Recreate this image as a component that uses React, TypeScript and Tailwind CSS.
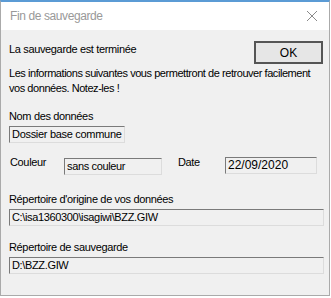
import React from "react";

const Field = ({value, className}: {value: string; className?: string}) => (
    <div
        className={`h-[17px] border border-t-[#7a7a7a] border-l-[#7a7a7a] border-r-[#dcdcdc] border-b-[#dcdcdc] bg-[#f0f0f0] pl-[2px] text-[11px] leading-[15px] text-black whitespace-nowrap overflow-hidden ${className ?? ''}`}>
        {value}
    </div>
);

const App = () => {
    return (
        <div className="w-[331px] h-[298px] bg-white" style={{fontFamily: '"Liberation Sans", Arial, sans-serif'}}>
            <div className="w-[330px] h-[296px] border-t-2 border-t-[#5b9bd5] border-x border-b border-[#aaaaaa] bg-[#f0f0f0] flex flex-col">
                <div className="h-[28px] bg-white flex items-center justify-between pl-[9px] pr-[9px]">
                    <span className="text-[12px] tracking-[-0.4px] text-[#999999]">Fin de sauvegarde</span>
                    <svg width="12" height="12" viewBox="0 0 12 12" className="mr-[2px]">
                        <path d="M1 1L11 11M11 1L1 11" stroke="#8a8a8a" strokeWidth="1"/>
                    </svg>
                </div>
                <div className="flex-1 px-[8px] text-[11px] tracking-[-0.35px] text-black">
                    <div className="flex items-start justify-between pt-[11px]">
                        <span className="leading-[14px] mt-[1px]">La sauvegarde est terminée</span>
                        <button
                            className="w-[69px] h-[23px] mr-[-2px] border-2 border-[#555555] bg-[#e6e6e6] text-[12px] tracking-normal flex items-center justify-center">
                            OK
                        </button>
                    </div>
                    <p className="mt-[2px] leading-[15px] tracking-[-0.45px]">
                        Les informations suivantes vous permettront de retrouver facilement vos données. Notez-les !
                    </p>
                    <div className="mt-[13px] leading-[14px]">Nom des données</div>
                    <Field value="Dossier base commune" className="w-[116px] mt-[3px] tracking-[-0.3px]"/>
                    <div className="flex items-start mt-[12px]">
                        <span className="w-[55px] pl-[1px] leading-[14px]">Couleur</span>
                        <Field value="sans couleur" className="w-[98px] mt-[3px]"/>
                        <span className="ml-[16px] w-[47px] leading-[14px]">Date</span>
                        <Field value="22/09/2020" className="w-[92px] mt-[2px] text-[12px] tracking-normal"/>
                    </div>
                    <div className="mt-[17px] leading-[14px]">Répertoire d'origine de vos données</div>
                    <Field value="C:\isa1360300\isagiwi\BZZ.GIW" className="w-[315px] mt-[3px]"/>
                    <div className="mt-[14px] leading-[14px]">Répertoire de sauvegarde</div>
                    <Field value="D:\BZZ.GIW" className="w-[315px] mt-[3px]"/>
                </div>
            </div>
        </div>
    );
};

export default App;
